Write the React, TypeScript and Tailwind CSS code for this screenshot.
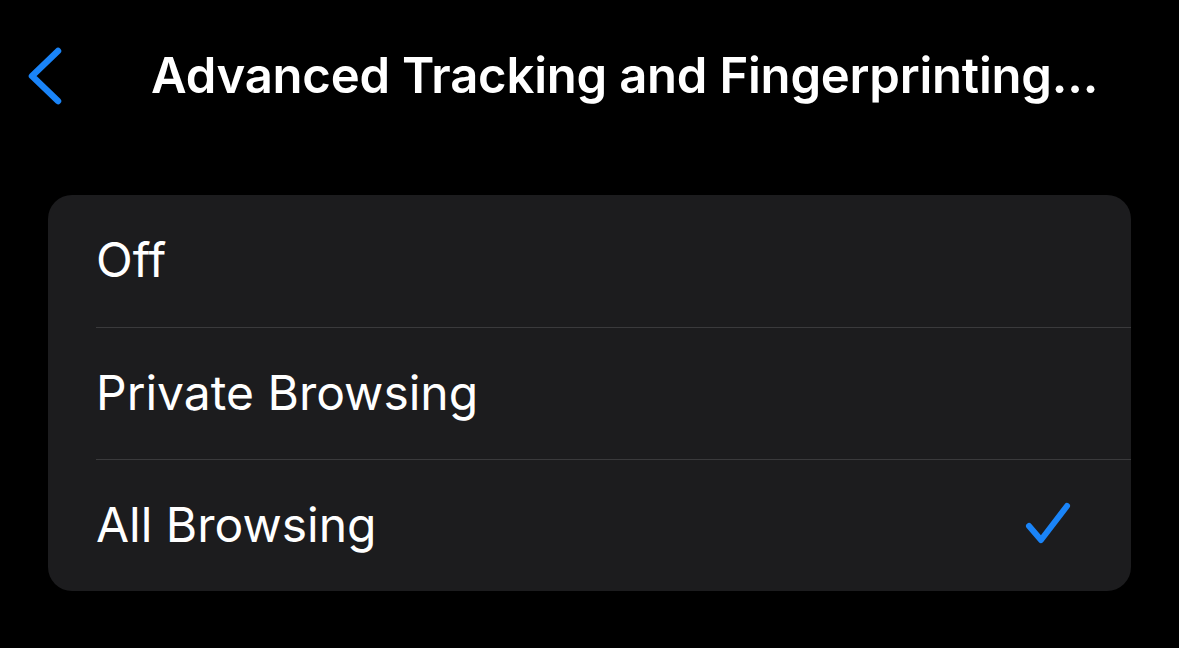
import React from "react";

const rows = ["Off", "Private Browsing", "All Browsing"];

export default function App() {
  return (
    <div
      className="w-[1179px] h-[648px] bg-black text-white overflow-hidden"
      style={{ fontFamily: "Inter, 'Noto Sans', sans-serif" }}
    >
      <div className="relative h-[150px] flex items-start">
        <svg
          className="absolute left-[26px] top-[46px]"
          width="38"
          height="60"
          viewBox="0 0 38 60"
          fill="none"
        >
          <path
            d="M32 5 L6 30 L32 55"
            stroke="#1a84f8"
            strokeWidth="6.5"
            strokeLinecap="round"
            strokeLinejoin="round"
          />
        </svg>
        <div className="w-full pt-[44px] pl-[151px] text-[49px] leading-[64px] font-semibold tracking-[-0.2px] whitespace-nowrap">
          Advanced Tracking and Fingerprinting...
        </div>
      </div>
      <div className="pt-[45px] pl-[48px] pr-[48px]">
        <div className="bg-[#1c1c1e] rounded-[24px] overflow-hidden">
          {rows.map((r, i) => (
            <div key={r} className="pl-[48px]">
              <div
                className={
                  "h-[132px] flex items-center justify-between pr-[56px] " +
                  (i > 0 ? "border-t border-[#3a3a3c]" : "")
                }
              >
                <span className="text-[48px] font-normal -mt-[2px]">
                  {r}
                </span>
                {i === 2 && (
                  <svg width="50" height="50" viewBox="0 0 50 50" fill="none">
                    <path
                      d="M4 25 L16 39 L42 5"
                      stroke="#1a84f8"
                      strokeWidth="6"
                      strokeLinecap="round"
                      strokeLinejoin="round"
                    />
                  </svg>
                )}
              </div>
            </div>
          ))}
        </div>
      </div>
    </div>
  );
}
